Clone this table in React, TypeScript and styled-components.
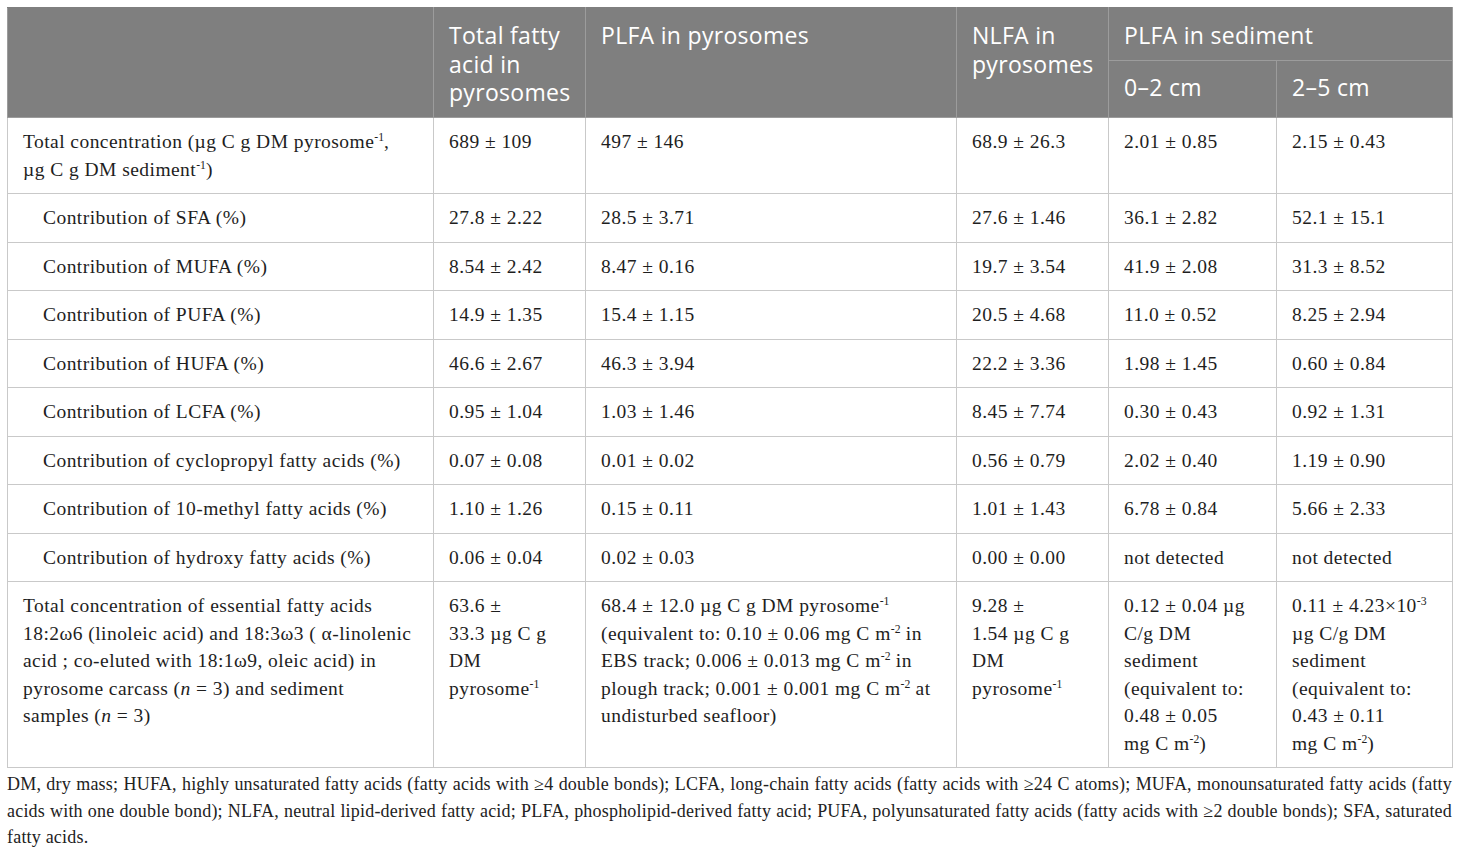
import React from "react";
import styled, { createGlobalStyle } from "styled-components";

const Global = createGlobalStyle`
  html, body { margin: 0; padding: 0; background: #ffffff; }
  body { font-family: "Liberation Serif", "Times New Roman", serif; color: #222; }
`;

const Page = styled.div`
  padding: 7px 8px 0 7px;
  width: 1445px;
`;

const Table = styled.table`
  width: 1445px;
  table-layout: fixed;
  border-collapse: collapse;
  border: 1px solid #cfcfcf;
`;

const Col = styled.col<{ $w: number }>`
  width: ${(p) => p.$w}px;
`;

const HeadCell = styled.th<{ $sub?: boolean }>`
  background: #7f7f7f;
  color: #ffffff;
  font-family: "Open Sans", "Noto Sans", sans-serif;
  font-weight: 400;
  font-size: 23px;
  line-height: 28.5px;
  letter-spacing: 0.3px;
  text-align: left;
  vertical-align: top;
  padding: ${(p) => (p.$sub ? "12px 16px 16px 15px" : "13px 16px 10px 15px")};
  border: 1px solid #9c9c9c;
  border-top-color: #7f7f7f;
`;

const Cell = styled.td<{ $indent?: boolean }>`
  font-size: 19.5px;
  line-height: 27.5px;
  letter-spacing: 0.45px;
  vertical-align: top;
  padding: 10px 16px 10px ${(p) => (p.$indent ? 35 : 15)}px;
  border: 1px solid #c9c9c9;
  color: #1e1e1e;
`;

const Sup = styled.sup`
  font-size: 0.6em;
  line-height: 0;
  vertical-align: 0.6em;
  letter-spacing: 0;
`;

const Footnote = styled.p`
  margin: 3px 0 0 0;
  font-family: "Liberation Serif", "Times New Roman", serif;
  font-size: 18px;
  line-height: 26.5px;
  text-align: justify;
  letter-spacing: 0.2px;
  color: #222;
  width: 1445px;
`;

const NB = "\u00a0";

const rows: [string, string, string, string, string, string][] = [
  ["Contribution of SFA (%)", "27.8 ± 2.22", "28.5 ± 3.71", "27.6 ± 1.46", "36.1 ± 2.82", "52.1 ± 15.1"],
  ["Contribution of MUFA (%)", "8.54 ± 2.42", "8.47 ± 0.16", "19.7 ± 3.54", "41.9 ± 2.08", "31.3 ± 8.52"],
  ["Contribution of PUFA (%)", "14.9 ± 1.35", "15.4 ± 1.15", "20.5 ± 4.68", "11.0 ± 0.52", "8.25 ± 2.94"],
  ["Contribution of HUFA (%)", "46.6 ± 2.67", "46.3 ± 3.94", "22.2 ± 3.36", "1.98 ± 1.45", "0.60 ± 0.84"],
  ["Contribution of LCFA (%)", "0.95 ± 1.04", "1.03 ± 1.46", "8.45 ± 7.74", "0.30 ± 0.43", "0.92 ± 1.31"],
  ["Contribution of cyclopropyl fatty acids (%)", "0.07 ± 0.08", "0.01 ± 0.02", "0.56 ± 0.79", "2.02 ± 0.40", "1.19 ± 0.90"],
  ["Contribution of 10-methyl fatty acids (%)", "1.10 ± 1.26", "0.15 ± 0.11", "1.01 ± 1.43", "6.78 ± 0.84", "5.66 ± 2.33"],
  ["Contribution of hydroxy fatty acids (%)", "0.06 ± 0.04", "0.02 ± 0.03", "0.00 ± 0.00", "not detected", "not detected"],
];

export default function App() {
  return (
    <>
      <Global />
      <Page>
        <Table>
          <colgroup>
            <Col $w={426} />
            <Col $w={152} />
            <Col $w={371} />
            <Col $w={152} />
            <Col $w={168} />
            <Col $w={176} />
          </colgroup>
          <thead>
            <tr>
              <HeadCell rowSpan={2}></HeadCell>
              <HeadCell rowSpan={2}>Total fatty acid in pyrosomes</HeadCell>
              <HeadCell rowSpan={2}>PLFA in pyrosomes</HeadCell>
              <HeadCell rowSpan={2}>NLFA in pyrosomes</HeadCell>
              <HeadCell colSpan={2}>PLFA in sediment</HeadCell>
            </tr>
            <tr>
              <HeadCell $sub>0–2 cm</HeadCell>
              <HeadCell $sub>2–5 cm</HeadCell>
            </tr>
          </thead>
          <tbody>
            <tr>
              <Cell>
                Total concentration (µg C g DM pyrosome<Sup>-1</Sup>, µg{NB}C g DM sediment<Sup>-1</Sup>)
              </Cell>
              <Cell>689 ± 109</Cell>
              <Cell>497 ± 146</Cell>
              <Cell>68.9 ± 26.3</Cell>
              <Cell>2.01 ± 0.85</Cell>
              <Cell>2.15 ± 0.43</Cell>
            </tr>
            {rows.map((r) => (
              <tr key={r[0]}>
                <Cell $indent>{r[0]}</Cell>
                <Cell>{r[1]}</Cell>
                <Cell>{r[2]}</Cell>
                <Cell>{r[3]}</Cell>
                <Cell>{r[4]}</Cell>
                <Cell>{r[5]}</Cell>
              </tr>
            ))}
            <tr>
              <Cell>
                Total concentration of essential fatty acids 18:2ω6 (linoleic acid) and 18:3ω3 ( α-linolenic acid ; co-eluted with 18:1ω9, oleic acid) in pyrosome carcass (<i>n</i> = 3) and sediment samples{NB}(<i>n</i> = 3)
              </Cell>
              <Cell>
                63.6 ± 33.3{NB}µg C g DM pyrosome<Sup>-1</Sup>
              </Cell>
              <Cell>
                68.4 ± 12.0 µg C g DM pyrosome<Sup>-1</Sup> (equivalent to: 0.10 ± 0.06 mg C m<Sup>-2</Sup> in EBS track; 0.006 ± 0.013 mg C m<Sup>-2</Sup> in plough track; 0.001 ± 0.001 mg C m<Sup>-2</Sup> at undisturbed seafloor)
              </Cell>
              <Cell>
                9.28 ± 1.54{NB}µg C g DM pyrosome<Sup>-1</Sup>
              </Cell>
              <Cell>
                0.12 ± 0.04 µg C/g DM sediment (equivalent to: 0.48 ± 0.05 mg{NB}C{NB}m<Sup>-2</Sup>)
              </Cell>
              <Cell>
                0.11 ± 4.23×10<Sup>-3</Sup> µg C/g DM sediment (equivalent to: 0.43 ± 0.11 mg{NB}C{NB}m<Sup>-2</Sup>)
              </Cell>
            </tr>
          </tbody>
        </Table>
        <Footnote>
          DM, dry mass; HUFA, highly unsaturated fatty acids (fatty acids with ≥4 double bonds); LCFA, long-chain fatty acids (fatty acids with ≥24 C atoms); MUFA, monounsaturated fatty acids (fatty acids with one double bond); NLFA, neutral lipid-derived fatty acid; PLFA, phospholipid-derived fatty acid; PUFA, polyunsaturated fatty acids (fatty acids with ≥2 double bonds); SFA, saturated fatty acids.
        </Footnote>
      </Page>
    </>
  );
}
